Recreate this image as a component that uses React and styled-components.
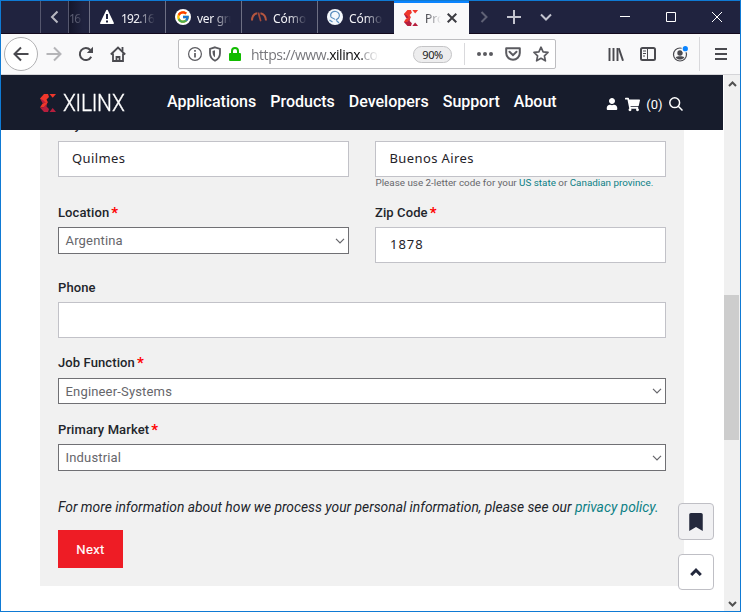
import React from "react";
import styled, { createGlobalStyle, css } from "styled-components";
import { FaUser, FaShoppingCart, FaBookmark } from "react-icons/fa";
import { FcGoogle } from "react-icons/fc";

const Global = createGlobalStyle`
  * { box-sizing: border-box; }
  body { margin: 0; background: #fff; font-family: Roboto, sans-serif; }
  svg { display: block; flex: none; }
`;

const Window = styled.div`
  width: 741px;
  height: 612px;
  border: 1px solid #0f7ad4;
  display: flex;
  flex-direction: column;
  overflow: hidden;
  background: #fff;
`;

/* Tab strip */
const TabStrip = styled.div`
  height: 33px;
  flex: none;
  display: flex;
  background: #20233f;
  border-bottom: 1px solid #12091d;
  color: #f4f4f8;
  font: 12px "Noto Sans", sans-serif;
`;
const Cell = styled.div`
  width: ${(p) => p.$w}px;
  display: flex;
  align-items: center;
  justify-content: center;
  flex: none;
  border-left: ${(p) => (p.$line ? "1px solid #55576e" : "0")};
`;
const Sliver = styled(Cell)`
  justify-content: flex-start;
  background: linear-gradient(90deg, #14162b, #20233f 70%);
  color: #5c5e73;
`;
const Tab = styled.div`
  width: ${(p) => p.$w || 76}px;
  flex: none;
  display: flex;
  align-items: center;
  padding-left: ${(p) => p.$pl || 9}px;
  gap: ${(p) => p.$gap || 6}px;
  border-left: 1px solid #6d6f83;
  ${(p) =>
    p.$active &&
    css`
      height: 33px;
      background: #f9f9fa;
      color: #33333a;
      border-left: 0;
      border-top: 2px solid #0a84ff;
      padding-bottom: 2px;
    `}
`;
const TabTitle = styled.span`
  width: ${(p) => p.$w || 34}px;
  padding-top: 2px;
  overflow: hidden;
  white-space: nowrap;
  letter-spacing: ${(p) => p.$ls || 0}px;
  mask-image: linear-gradient(90deg, #000 ${(p) => p.$solid ?? 45}%, transparent);
`;
const Spacer = styled.div`
  flex: 1;
`;

/* Toolbar */
const Toolbar = styled.div`
  height: 41px;
  flex: none;
  display: flex;
  align-items: center;
  background: #f9f9fa;
  border-bottom: 1px solid #d5d5d8;
  padding-left: 3px;
  color: #4a4a4f;
`;
const BackButton = styled.div`
  width: 34px;
  height: 34px;
  border: 1px solid #b1b1b3;
  border-radius: 50%;
  background: #fff;
  display: flex;
  align-items: center;
  justify-content: center;
`;
const ToolCell = styled.div`
  width: ${(p) => p.$w || 32}px;
  flex: none;
  display: flex;
  justify-content: center;
  color: ${(p) => p.$c || "inherit"};
`;
const AddressBar = styled.div`
  width: 378px;
  height: 30px;
  margin-left: 44px;
  border: 1px solid #bdbdc0;
  border-radius: 2px;
  background: #fff;
  display: flex;
  align-items: center;
  padding-left: 8px;
`;
const Url = styled.div`
  width: 128px;
  flex: none;
  margin-left: 10px;
  overflow: hidden;
  white-space: nowrap;
  font: 14px "Open Sans", sans-serif;
  letter-spacing: -0.48px;
  color: #77777c;
  mask-image: linear-gradient(90deg, #000 84%, transparent);
  b { font-weight: 400; color: #0c0c0d; }
`;
const Zoom = styled.div`
  width: 39px;
  flex: none;
  height: 17px;
  margin-left: 34px;
  border: 1px solid #c4c4c6;
  border-radius: 9px;
  background: #ededee;
  color: #1c1c20;
  font: 11px/15px "Noto Sans", sans-serif;
  letter-spacing: -0.4px;
  text-align: center;
`;
const VRule = styled.div`
  width: 1px;
  flex: none;
  height: ${(p) => p.$h}px;
  background: #d9d9dc;
`;

/* Site */
const Body = styled.div`
  flex: 1;
  min-height: 0;
  display: flex;
  position: relative;
`;
const Page = styled.div`
  width: 722px;
  display: flex;
  flex-direction: column;
  overflow: hidden;
`;
const SiteHeader = styled.header`
  height: 55px;
  flex: none;
  background: #171c2c;
  color: #fff;
  display: flex;
  padding-left: 39px;
`;
const Brand = styled.div`
  width: 127px;
  height: 55px;
  display: flex;
  align-items: center;
  gap: 7px;
`;
const Wordmark = styled.span`
  font: 300 24px/26px Roboto, sans-serif;
  -webkit-text-stroke: 0.35px #fff;
  transform: scaleX(0.875);
  transform-origin: 0 50%;
  letter-spacing: -0.3px;
`;
const Nav = styled.nav`
  display: flex;
  gap: 14px;
  font: 500 16px/53px Roboto, sans-serif;
  white-space: nowrap;
  width: 439px;
`;
const Tools = styled.div`
  display: flex;
  align-items: center;
  height: 57px;
  padding-top: 1px;
  font-size: 13px;
  gap: 6.600px;
`;
const Scroller = styled.div`
  flex: 1;
  min-height: 0;
  overflow: hidden;
`;
const Panel = styled.main`
  width: 644px;
  height: 475px;
  margin: -19px 0 0 39px;
  padding: 0 18px;
  background: #f1f1f1;
  color: #22252b;
`;
const Row = styled.div`
  display: grid;
  grid-template-columns: ${(p) => (p.$two ? "291px 291px" : "1fr")};
  column-gap: 26px;
  height: ${(p) => p.$h}px;
`;
const Field = styled.div`
  display: flex;
  flex-direction: column;
`;
const Label = styled.label`
  height: ${(p) => p.$h || 25}px;
  padding-top: ${(p) => p.$pt ?? 1}px;
  font: 500 13px/20px Roboto, sans-serif;
  letter-spacing: 0.1px;
  i {
    font-style: normal;
    color: #f00;
    margin-left: 2px;
    font-weight: 700;
    font-size: 15px;
    line-height: 10px;
    vertical-align: -1px;
  }
`;
const Input = styled.div`
  height: 36px;
  flex: none;
  border: 1px solid #c2c2c8;
  background: #fff;
  padding-left: ${(p) => p.$pl || 13}px;
  font: 13px/33px "Noto Sans", sans-serif;
  letter-spacing: ${(p) => p.$ls || 0.4}px;
  color: #1f2229;
`;
const Select = styled.div`
  height: ${(p) => p.$h || 27}px;
  flex: none;
  border: 1px solid #707074;
  background: #fff;
  padding: 0 3px 0 6.500px;
  display: flex;
  align-items: center;
  justify-content: space-between;
  font-size: 13px;
  letter-spacing: 0.17px;
  color: #66666b;
`;
const Hint = styled.div`
  padding-left: 0.5px;
  font-size: 9.850px;
  line-height: 12px;
  white-space: nowrap;
  color: #66666b;
`;
const Link = styled.span`
  color: #0c8085;
`;
const Notice = styled.p`
  margin: 0;
  height: 33px;
  font: italic 13.820px/20px Roboto, sans-serif;
  white-space: nowrap;
`;
const NextButton = styled.div`
  width: 65px;
  height: 38px;
  background: #ee1c25;
  color: #fff;
  font: 400 13px/39px Roboto, sans-serif;
  letter-spacing: 0.35px;
  -webkit-text-stroke: 0.2px #fff;
  text-align: center;
`;
const Floating = styled.div`
  position: absolute;
  left: 677px;
  top: 428px;
  display: flex;
  flex-direction: column;
  gap: 14px;
`;
const FloatButton = styled.div`
  width: 36px;
  height: ${(p) => p.$h}px;
  border: 1px solid #bfbfc5;
  border-radius: 4px;
  background: ${(p) => p.$bg};
  color: #23283c;
  display: flex;
  align-items: center;
  justify-content: center;
`;
const Scrollbar = styled.div`
  width: 16px;
  margin-left: 1px;
  background: #f0f0f0;
  display: flex;
  flex-direction: column;
  align-items: center;
  padding: 6px 0 4px;
`;
const Thumb = styled.div`
  width: 15px;
  height: 145px;
  margin: 208px 1px auto 0;
  background: #cdcdcd;
`;

const Stroke = ({ w = 16, h = w, box, sw = 2, children, ...rest }) => (
  <svg width={w} height={h} viewBox={box || `0 0 ${w} ${h}`} fill="none" stroke="currentColor" strokeWidth={sw} {...rest}>
    {children}
  </svg>
);
const InfoIcon = styled(Stroke)`
  margin-right: 5px;
`;
const ShieldIcon = styled(Stroke)`
  margin-right: 7px;
`;
const Chevron = () => (
  <Stroke w={10} h={6} sw={1.2}><path d="M1 .8l4 4 4-4" /></Stroke>
);
const XilinxMark = ({ w, h }) => (
  <svg width={w} height={h} viewBox="0 0 16 18">
    <path fill="#b61e3d" d="M0 4.500L3 4l3 5H2.500z" />
    <path fill="#f0372b" d="M4 0h4L9 3 6.500 5.500 8 8.500 6 9 3 6 0 4.500z" />
    <path fill="#f0372b" d="M2.500 9.500L7.500 8 7 10 4 13.500H0z" />
    <path fill="#b61e3d" d="M0 13.500h3.500L7 9.500 6.500 12.500 9 15 8 18H4z" />
    <path fill="#f0372b" d="M9.500 0H16l-3.300 3.800z" />
    <path fill="#b61e3d" d="M9.500 18l3.200-4 3.300 4z" />
  </svg>
);

const Tabs = () => (
  <TabStrip>
    <Cell $w={39} />
    <Cell $w={28} $line><Stroke w={9} h={14} color="#b7b8c2"><path d="M7.5 1.5L2 7l5.500 5.500" /></Stroke></Cell>
    <Sliver $w={21} $line><TabTitle $w={16} $ls={-1.5}>16</TabTitle></Sliver>
    <Tab>
      <svg width="16" height="16" viewBox="0 0 16 16">
        <path d="M8 1.600l6 12.600H2z" fill="#fff" stroke="#fff" strokeWidth="1.800" strokeLinejoin="round" />
        <path d="M8 5v5M8 11.500v2" stroke="#20233f" strokeWidth="2" />
      </svg>
      <TabTitle $ls={-0.75}>192.16</TabTitle>
    </Tab>
    <Tab>
      <svg width="16" height="16" viewBox="0 0 16 16"><circle cx="8" cy="8" r="8" fill="#fff" /><FcGoogle x="1" y="1" size={14} /></svg>
      <TabTitle $ls={-0.3}>ver gru</TabTitle>
    </Tab>
    <Tab>
      <Stroke w={16} color="#b5563f" sw={2}>
        <path d="M1 11.500C1 8 3 5 6 4.300M9.500 4.200c3 .6 5.300 3.300 5.500 7.300" />
        <path d="M6.300 3.500h2L10.500 12 9 12.500z" fill="#a34a3c" stroke="none" />
      </Stroke>
      <TabTitle>Cómo</TabTitle>
    </Tab>
    <Tab $w={77}>
      <svg width="16" height="16" viewBox="0 0 16 16">
        <circle cx="8" cy="8" r="8" fill="#f4f8fc" />
        <path d="M4 8C2.500 4 6 2 9 2.500s4.500 4 2.500 6.500L9 11M4 8c1 1.500 3 1 4 2.500M9 11l3 3M2.500 11l3 2" fill="none" stroke="#5c8fbf" strokeWidth="1.200" />
      </svg>
      <TabTitle>Cómo</TabTitle>
    </Tab>
    <Tab $active $w={75} $gap={6} $pl={9}>
      <XilinxMark w={16} h={16} />
      <TabTitle $w={16} $solid={0}>Pro</TabTitle>
      <Stroke w={10} color="#3c3c42"><path d="M.7.7l8.600 8.600M9.300.7L.7 9.300" /></Stroke>
    </Tab>
    <Cell $w={30}><Stroke w={8} h={12} color="#5f6175"><path d="M1.500 1L6.500 6l-5 5" /></Stroke></Cell>
    <Cell $w={30}><Stroke w={14} color="#c3c4cf"><path d="M7 0v14M0 7h14" /></Stroke></Cell>
    <Cell $w={33}><Stroke w={12} h={8} color="#c3c4cf"><path d="M1 1.500l5 5 5-5" /></Stroke></Cell>
    <Spacer />
    <Cell $w={46}><Stroke w={10} color="#fff" sw={1}><path d="M0 4.500h10" /></Stroke></Cell>
    <Cell $w={46}><Stroke w={10} color="#fff" sw={1}><path d="M.5.500h9v9h-9z" /></Stroke></Cell>
    <Cell $w={46}><Stroke w={10} color="#fff" sw={1}><path d="M0 0l10 10M10 0L0 10" /></Stroke></Cell>
  </TabStrip>
);

const BrowserBar = () => (
  <Toolbar>
    <BackButton><Stroke w={16} sw={2}><path d="M15.500 8H1.500M8 1.500L1.500 8 8 14.500" /></Stroke></BackButton>
    <ToolCell $c="#b5b5b8"><Stroke w={16} sw={2}><path d="M.5 8h14M8 1.500L14.500 8 8 14.500" /></Stroke></ToolCell>
    <ToolCell>
      <Stroke w={16} sw={2}><path d="M13.200 10.800A6 6 0 1 1 12.300 4" /><path d="M15 .8v6.200H8.800z" fill="currentColor" stroke="none" /></Stroke>
    </ToolCell>
    <ToolCell>
      <Stroke w={16} sw={1.800}><path d="M.8 8.500L8 1.500l7.200 7M3 7.500V15h10V7.500" /><path d="M6.500 15v-4h3v4" /><path d="M12.500 1v4" /></Stroke>
    </ToolCell>
    <AddressBar>
      <InfoIcon w={16} sw={1.200} color="#5b5b60"><circle cx="8" cy="8" r="6.400" /><path d="M8 7v4.500M8 4v1.800" strokeWidth="1.700" /></InfoIcon>
      <ShieldIcon w={14} h={16} sw={1.800} color="#5b5b60">
        <path d="M7 1.300l5 1.500v4.500c0 3.500-2 6-5 7.400-3-1.400-5-3.900-5-7.400V2.800z" /><path d="M7 4.300v7C5 10 4.500 8 4.500 5z" fill="currentColor" stroke="none" />
      </ShieldIcon>
      <svg width="12" height="14" viewBox="0 0 12 14">
        <path d="M3 7V4a3 3 0 0 1 6 0v3" fill="none" stroke="#12bc00" strokeWidth="2" /><rect y="6" width="12" height="8" rx="1" fill="#12bc00" />
      </svg>
      <Url>https://www.<b>xilinx.</b>com</Url>
      <Zoom>90%</Zoom>
      <ToolCell $w={12} />
      <VRule $h={22} />
      <ToolCell $w={40}>
        <svg width="16" height="4" fill="#5b5b60"><circle cx="2" cy="2" r="2" /><circle cx="8" cy="2" r="2" /><circle cx="14" cy="2" r="2" /></svg>
      </ToolCell>
      <ToolCell $w={16}><Stroke w={16} h={14} color="#5b5b60"><path d="M1.200 1.200h13.600V6a6.800 6.800 0 0 1-13.600 0z" strokeLinejoin="round" /><path d="M4.500 4.800L8 8.200l3.500-3.400" strokeLinecap="round" /></Stroke></ToolCell>
      <ToolCell $w={40}><Stroke w={16} color="#5b5b60" sw={1.700}><path d="M8 1.200l2.100 4.600 4.900.6-3.600 3.400 1 5L8 12.300l-4.400 2.500 1-5L1 6.400l4.900-.6z" strokeLinejoin="round" /></Stroke></ToolCell>
    </AddressBar>
    <ToolCell $w={44} />
    <ToolCell><Stroke w={16} h={14} sw={2}><path d="M1.500 1v13M5.500 1v13M9.500 1v13" strokeWidth="1.900" /><path d="M10.800 1.200l4.200 12.500" /></Stroke></ToolCell>
    <ToolCell><Stroke w={16} h={14} sw={2}><rect x="1" y="1" width="14" height="12" rx="1.500" /><path d="M7.500 1v12M3 4h3M3 6.500h3M3 9h2" strokeWidth="1" /></Stroke></ToolCell>
    <ToolCell>
      <Stroke w={18} h={18} sw={1.200}><circle cx="9" cy="9.500" r="6.500" /><circle cx="9" cy="8" r="2.700" fill="currentColor" stroke="none" /><path d="M4.700 12.500c1-1.300 2.500-1.300 4.300-1.300s3.300 0 4.300 1.300c-2.500 2.800-6 2.800-8.600 0z" fill="currentColor" stroke="none" /><circle cx="14" cy="4" r="3.500" fill="#f9f9fa" stroke="none" /><circle cx="14.300" cy="3.700" r="2.600" fill="#0a84ff" stroke="none" /></Stroke>
    </ToolCell>
    <ToolCell $w={3} />
    <VRule $h={34} />
    <Spacer />
    <ToolCell $w={39}><Stroke w={12} h={12} sw={2}><path d="M0 1h12M0 6h12M0 11h12" /></Stroke></ToolCell>
  </Toolbar>
);

const TextField = ({ label, required, value, pl, ls }) => (
  <Field>
    <Label>{label}{required && <i>*</i>}</Label>
    <Input $pl={pl} $ls={ls}>{value}</Input>
  </Field>
);
const SelectField = ({ label, value, h, lh }) => (
  <Field>
    <Label $h={lh}>{label}<i>*</i></Label>
    <Select $h={h}>{value}<Chevron /></Select>
  </Field>
);

export default function App() {
  return (
    <Window>
      <Global />
      <Tabs />
      <BrowserBar />
      <Body>
        <Page>
          <SiteHeader>
            <Brand><XilinxMark w={16} h={18} /><Wordmark>XILINX</Wordmark></Brand>
            <Nav>
              <span>Applications</span><span>Products</span><span>Developers</span><span>Support</span><span>About</span>
            </Nav>
            <Tools>
              <FaUser size={12} /><FaShoppingCart size={15} /><span>(0)</span>
              <Stroke w={14} sw={1.500}><circle cx="5.700" cy="5.700" r="4.900" /><path d="M9.300 9.300l4.200 4.200" /></Stroke>
            </Tools>
          </SiteHeader>
          <Scroller>
            <Panel>
              <Row $two $h={91}>
                <Field><Label $h={30} $pt={4}>City</Label><Input>Quilmes</Input></Field>
                <Field>
                  <Label $h={30} />
                  <Input $pl={13.5}>Buenos Aires</Input>
                  <Hint>Please use 2-letter code for your <Link>US state</Link> or <Link>Canadian province.</Link></Hint>
                </Field>
              </Row>
              <Row $two $h={75}>
                <SelectField label="Location" value="Argentina" />
                <TextField label="Zip Code" required value="1878" pl={14} ls={1} />
              </Row>
              <Row $h={75}><TextField label="Phone" /></Row>
              <Row $h={67}><SelectField label="Job Function" value="Engineer-Systems" h={26} lh={26} /></Row>
              <Row $h={78}><SelectField label="Primary Market" value="Industrial" /></Row>
              <Notice>For more information about how we process your personal information, please see our <Link>privacy policy.</Link></Notice>
              <NextButton>Next</NextButton>
            </Panel>
          </Scroller>
        </Page>
        <Scrollbar>
          <Stroke w={9} h={6} color="#505050"><path d="M1 5l3.500-3.500L8 5" /></Stroke>
          <Thumb />
          <Stroke w={9} h={6} color="#505050"><path d="M1 1l3.500 3.500L8 1" /></Stroke>
        </Scrollbar>
        <Floating>
          <FloatButton $h={37} $bg="#f1f1f3"><FaBookmark size={18} /></FloatButton>
          <FloatButton $h={36} $bg="#fff"><Stroke w={12} h={8} sw={3}><path d="M1.200 7L6 2.200 10.800 7" /></Stroke></FloatButton>
        </Floating>
      </Body>
    </Window>
  );
}
